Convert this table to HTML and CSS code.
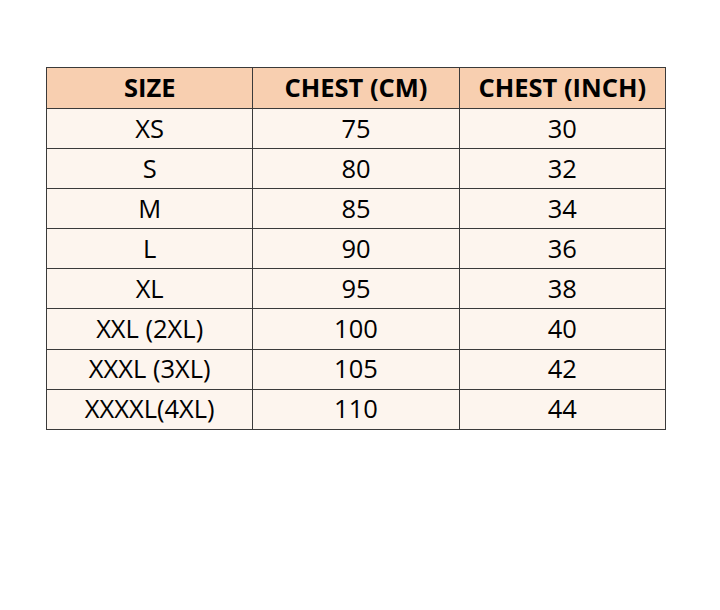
FILE: index.html
```html
<!DOCTYPE html>
<html>
<head>
<meta charset="utf-8">
<link rel="stylesheet" href="styles.css">
</head>
<body>
<div class="page">
<table class="sizes">
<thead>
<tr><th>SIZE</th><th>CHEST (CM)</th><th>CHEST (INCH)</th></tr>
</thead>
<tbody>
<tr><td>XS</td><td>75</td><td>30</td></tr>
<tr><td>S</td><td>80</td><td>32</td></tr>
<tr><td>M</td><td>85</td><td>34</td></tr>
<tr><td>L</td><td>90</td><td>36</td></tr>
<tr><td>XL</td><td>95</td><td>38</td></tr>
<tr><td>XXL (2XL)</td><td>100</td><td>40</td></tr>
<tr><td>XXXL (3XL)</td><td>105</td><td>42</td></tr>
<tr><td>XXXXL(4XL)</td><td>110</td><td>44</td></tr>
</tbody>
</table>
</div>
</body>
</html>
```
FILE: styles.css
```css
html, body {
  margin: 0;
  padding: 0;
  background: #ffffff;
}
.page {
  width: 720px;
  height: 610px;
  padding: 67px 0 0 46px;
  box-sizing: border-box;
}
.sizes {
  border-collapse: collapse;
  table-layout: fixed;
  width: 620px;
  font-family: "Open Sans", "Liberation Sans", sans-serif;
  font-size: 25.5px;
  color: #000;
}
.sizes th, .sizes td {
  border: 1px solid #3a3a3a;
  height: 39.1px;
  padding: 0;
  text-align: center;
  vertical-align: middle;
  width: 33.33%;
  line-height: 1;
}
.sizes th {
  background: #f8cfb0;
  font-weight: 700;
  height: 40px;
}
.sizes td {
  background: #fdf5ee;
  font-weight: 400;
}
```
